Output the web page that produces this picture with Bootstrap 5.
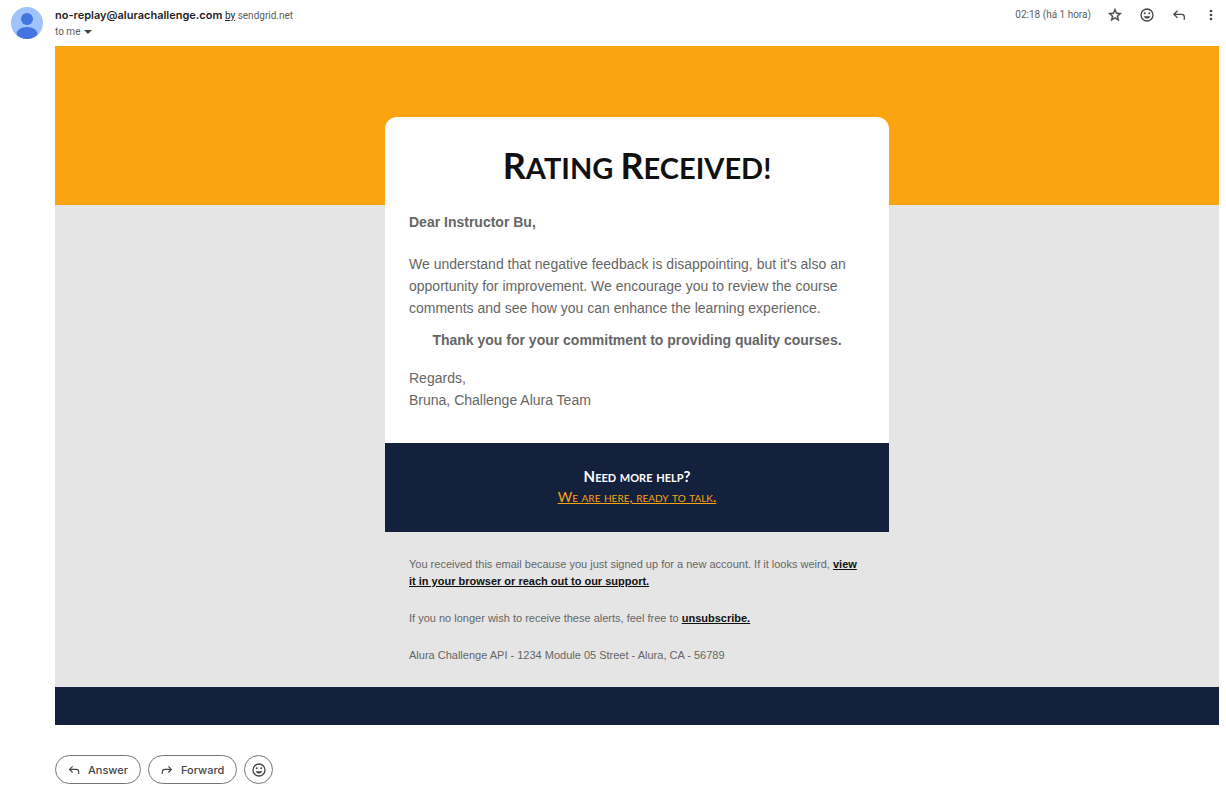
<!DOCTYPE html>
<html lang="en">
<head>
<meta charset="utf-8">
<meta name="viewport" content="width=device-width, initial-scale=1">
<title>Rating Received!</title>
<link rel="stylesheet" href="https://cdn.jsdelivr.net/npm/bootstrap@5.3.0/dist/css/bootstrap.min.css">
<style>
  :root { --navy: #14213d; --amber: #fca311; --mist: #e5e5e5; }
  body { font-family: Roboto, "Liberation Sans", sans-serif; font-size: 10px; line-height: 16px; color: #5e5e5e; }
  .message-head { padding: 7px 7px 6px 11px; gap: 12px; }
  .sender { font-family: Inter, sans-serif; font-size: 11px; font-weight: 600; color: #1f1f1f; }
  .icon-btn { width: 16px; height: 16px; color: #444746; }
  .icon-btn svg, .pill svg { display: block; fill: currentColor; }
  .message-body { margin: 0 7px 0 55px; }
  .mail { padding-top: 71px; background: linear-gradient(var(--amber) 159px, var(--mist) 159px); font-family: "Liberation Sans", Arial, sans-serif; color: #666; }
  .mail-column { max-width: 504px; }
  .letter { border-radius: 12px 12px 0 0; padding: 28px 24px 32px; font-size: 14px; line-height: 22px; }
  .letter h1 { font: 700 29px/40px Lato, sans-serif; color: #111; margin-bottom: 23px; }
  .cap-word { display: inline-block; text-transform: uppercase; }
  .cap-word::first-letter { font-size: 36px; line-height: 40px; }
  .letter .main-text { margin-bottom: 10px; }
  .help { background: var(--navy); padding: 23px 24px 25px; font-family: Lato, sans-serif; font-variant: small-caps; font-size: 14px; line-height: 20px; }
  .help h2 { font-size: 15px; line-height: 21px; font-weight: 700; }
  .help a { color: var(--amber); }
  .fine-print { padding: 24px 24px 23px; font-size: 11px; line-height: 17px; }
  .fine-print p { margin-bottom: 20px; }
  .fine-print a { color: #111; font-weight: 700; }
  .mail-end { height: 38px; background: var(--navy); }
  .actions { gap: 7px; padding: 30px 0 13px; }
  .pill { height: 29px; border: 1px solid #747775; border-radius: 15px; padding: 0 12px 0 11px; gap: 7px; font-family: Inter, sans-serif; font-size: 11px; line-height: 16px; font-weight: 500; color: #444746; }
  .pill-round { width: 29px; padding: 0; }
</style>
</head>
<body class="bg-white">
<svg class="d-none" aria-hidden="true">
  <symbol id="reply" viewBox="0 0 24 24"><path d="M19 19v-4a3 3 0 0 0-3-3H6.800l3.600 3.600L9 17l-6-6 6-6 1.400 1.400L6.800 10H16a5 5 0 0 1 5 5v4z"/></symbol>
  <symbol id="smile" viewBox="0 0 24 24"><path fill-rule="evenodd" d="M12 2a10 10 0 1 0 0 20 10 10 0 0 0 0-20zm0 2a8 8 0 1 1 0 16 8 8 0 0 1 0-16z"/><circle cx="8.500" cy="9.500" r="1.500"/><circle cx="15.500" cy="9.500" r="1.500"/><path d="M7 14h10a5.300 5.300 0 0 1-10 0z"/></symbol>
</svg>

<header class="message-head d-flex">
  <svg width="32" height="32" viewBox="0 0 32 32" role="img" aria-label="Sender avatar">
    <clipPath id="disc"><circle cx="16" cy="16" r="16"/></clipPath>
    <g clip-path="url(#disc)"><path fill="#a0c2ff" d="M0 0h32v32H0z"/><circle cx="16" cy="12" r="6" fill="#4374e0"/><ellipse cx="16" cy="26.500" rx="10.500" ry="6.500" fill="#4374e0"/></g>
  </svg>
  <div class="flex-grow-1">
    <div><span class="sender">no-replay@alurachallenge.com</span> <u class="text-dark">by</u> sendgrid.net</div>
    <div class="d-flex align-items-center gap-1">to me
      <button type="button" class="btn p-0 border-0 d-flex" aria-label="Show details"><svg width="8" height="4" viewBox="0 0 8 4"><path fill="#444746" d="M0 0h8L4 4z"/></svg></button>
    </div>
  </div>
  <div class="d-flex align-items-start gap-3">
    <time>02:18 (há 1 hora)</time>
    <button type="button" class="btn icon-btn p-0 border-0" aria-label="Star"><svg width="16" height="16" viewBox="0 0 24 24"><path fill-rule="evenodd" d="M22 9.240l-7.190-.62L12 2 9.190 8.630 2 9.240l5.460 4.730L5.820 21 12 17.270 18.180 21l-1.630-7.030zM12 15.400l-3.760 2.270 1-4.280-3.320-2.880 4.380-.38L12 6.100l1.710 4.040 4.380.38-3.320 2.880 1 4.280z" stroke="currentColor" stroke-width=".6"/></svg></button>
    <button type="button" class="btn icon-btn p-0 border-0" aria-label="React"><svg width="16" height="16"><use href="#smile"/></svg></button>
    <button type="button" class="btn icon-btn p-0 border-0" aria-label="Reply"><svg width="16" height="16"><use href="#reply"/></svg></button>
    <button type="button" class="btn icon-btn p-0 border-0" aria-label="More"><svg width="16" height="16" viewBox="0 0 24 24"><circle cx="12" cy="6" r="2"/><circle cx="12" cy="12" r="2"/><circle cx="12" cy="18" r="2"/></svg></button>
  </div>
</header>

<main class="message-body">
  <article class="mail">
    <div class="mail-column mx-auto">
      <section class="letter bg-white">
        <h1 class="text-center"><span class="cap-word">Rating</span> <span class="cap-word">Received!</span></h1>
        <p class="fw-bold mb-3 pb-1">Dear Instructor Bu,</p>
        <p class="main-text">We understand that negative feedback is disappointing, but it's also an opportunity for improvement. We encourage you to review the course comments and see how you can enhance the learning experience.</p>
        <p class="fw-bold text-center mb-3">Thank you for your commitment to providing quality courses.</p>
        <p class="mb-0">Regards,<br>Bruna, Challenge Alura Team</p>
      </section>
      <section class="help text-center">
        <h2 class="text-white mb-0">Need more help?</h2>
        <a href="#">We are here, ready to talk.</a>
      </section>
      <footer class="fine-print">
        <p>You received this email because you just signed up for a new account. If it looks weird, <a href="#">view it in your browser or reach out to our support.</a></p>
        <p>If you no longer wish to receive these alerts, feel free to <a href="#">unsubscribe.</a></p>
        <p class="mb-0">Alura Challenge API - 1234 Module 05 Street - Alura, CA - 56789</p>
      </footer>
    </div>
    <div class="mail-end"></div>
  </article>

  <div class="actions d-flex">
    <button type="button" class="btn pill d-flex align-items-center"><svg width="14" height="14"><use href="#reply"/></svg>Answer</button>
    <button type="button" class="btn pill d-flex align-items-center"><svg width="14" height="14"><use href="#reply" transform="translate(14 0) scale(-1 1)"/></svg>Forward</button>
    <button type="button" class="btn pill pill-round d-flex align-items-center justify-content-center" aria-label="React"><svg width="16" height="16"><use href="#smile"/></svg></button>
  </div>
</main>
<script src="https://cdn.jsdelivr.net/npm/bootstrap@5.3.0/dist/js/bootstrap.bundle.min.js"></script>
</body>
</html>
